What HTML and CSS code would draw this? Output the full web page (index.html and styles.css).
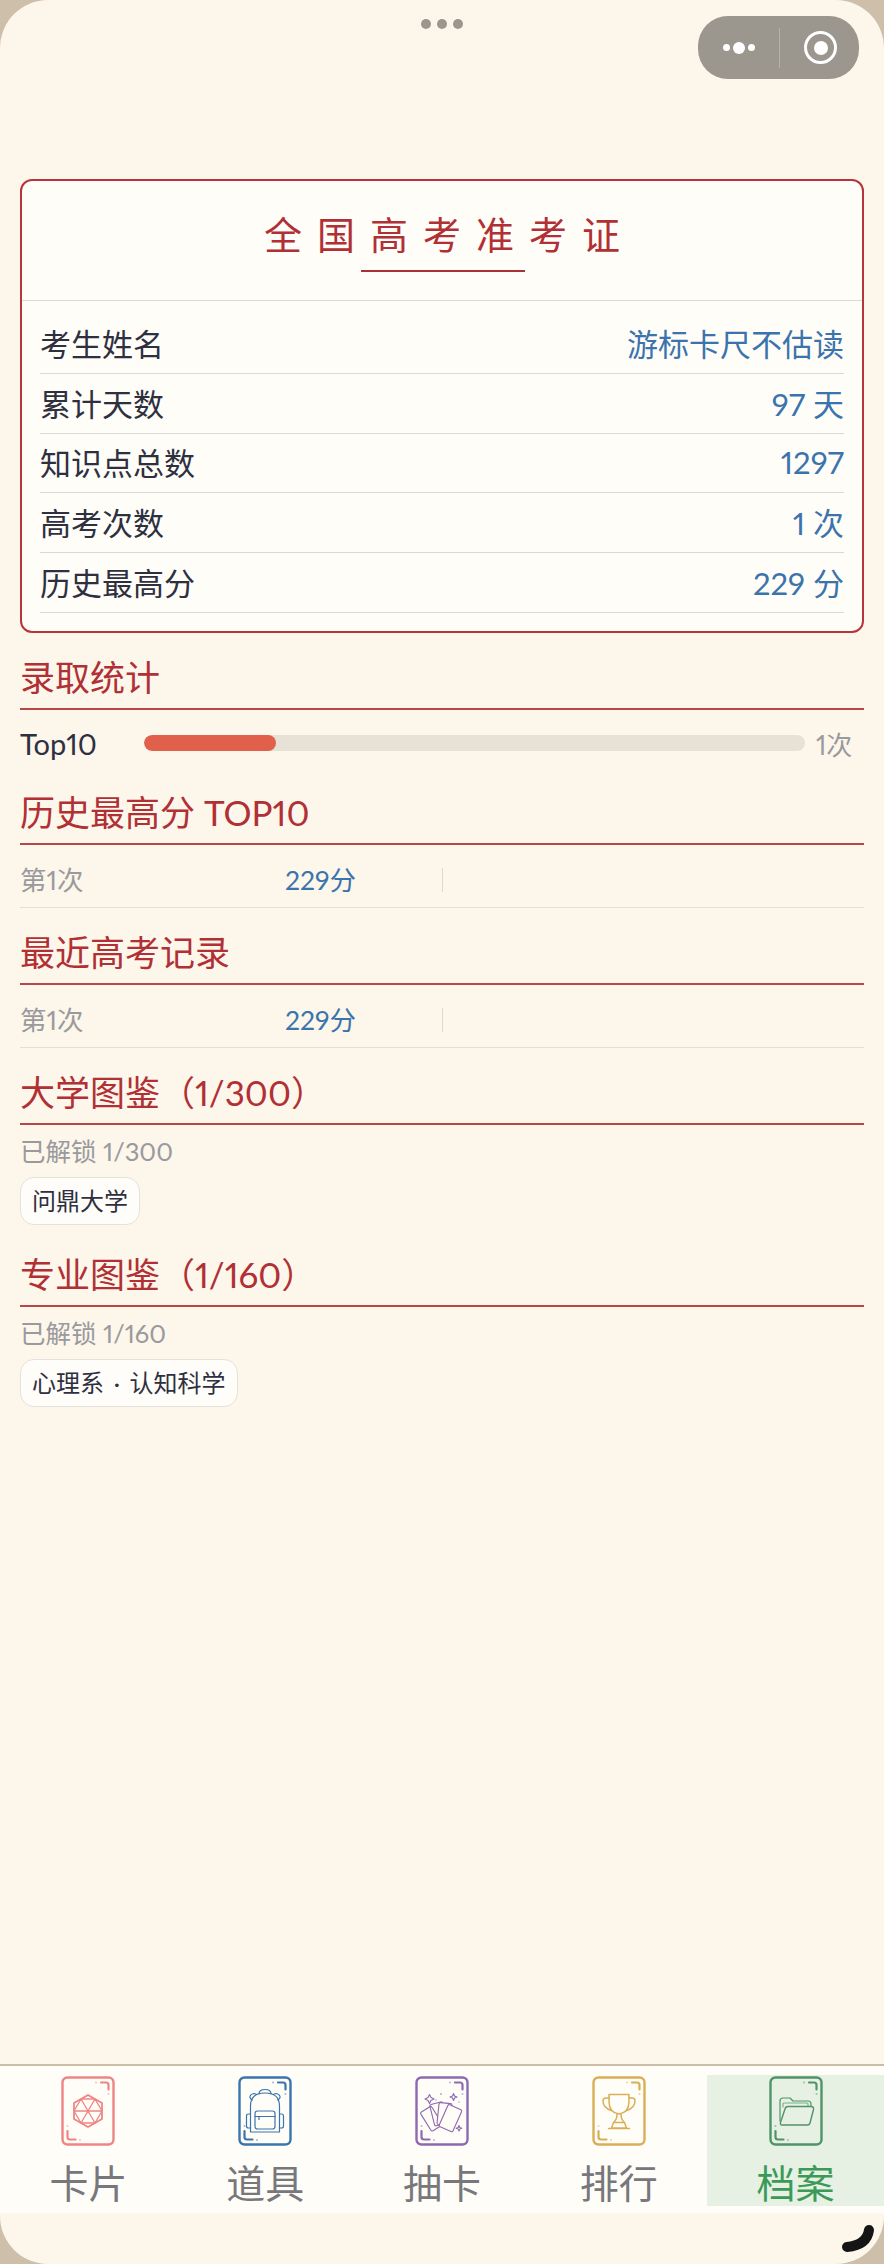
FILE: index.html
```html
<!DOCTYPE html>
<html lang="zh-CN">
<head>
    <meta charset="UTF-8">
    <title>档案</title>
    <link rel="stylesheet" href="styles.css">
</head>
<body>
    <svg class="defs" width="0" height="0">
        <symbol id="cardFrame" viewBox="0 0 54 70">
            <rect x="1.5" y="1.5" width="51" height="67" rx="5" fill="none" stroke="currentColor" stroke-width="2.4"/>
            <path d="M40 6.5h5q2.500 0 2.500 2.500v4.500M6.500 55v6q0 2.500 2.500 2.500h5.500" fill="none" stroke="currentColor" stroke-width="2.200" stroke-linecap="round"/>
            <circle cx="35" cy="6.500" r="1" fill="currentColor" opacity=".5"/>
            <circle cx="47.500" cy="18" r="1" fill="currentColor" opacity=".5"/>
            <circle cx="6.500" cy="50" r="1" fill="currentColor" opacity=".5"/>
            <circle cx="19" cy="64" r="1" fill="currentColor" opacity=".5"/>
        </symbol>
    </svg>

    <div class="screen">
        <div class="drag-dots"><i></i><i></i><i></i></div>
        <div class="capsule">
            <div class="capsule-more"><i></i><i></i><i></i></div>
            <div class="capsule-line"></div>
            <div class="capsule-ring"><i></i></div>
        </div>

        <main class="content">
            <div class="ticket">
                <div class="ticket-head">
                    <h1>全国高考准考证</h1>
                    <div class="ticket-mark"></div>
                </div>
                <div class="ticket-rows">
                    <div class="ticket-row"><span>考生姓名</span><b>游标卡尺不估读</b></div>
                    <div class="ticket-row"><span>累计天数</span><b>97 天</b></div>
                    <div class="ticket-row"><span>知识点总数</span><b>1297</b></div>
                    <div class="ticket-row"><span>高考次数</span><b>1 次</b></div>
                    <div class="ticket-row"><span>历史最高分</span><b>229 分</b></div>
                </div>
            </div>

            <section class="section">
                <h2>录取统计</h2>
                <div class="stat-row">
                    <span class="stat-name">Top10</span>
                    <div class="stat-track"><div class="stat-fill" style="width: 20%"></div></div>
                    <span class="stat-count">1次</span>
                </div>
            </section>

            <section class="section">
                <h2>历史最高分 TOP10</h2>
                <div class="score-row">
                    <span class="score-name">第1次</span>
                    <span class="score-value">229分</span>
                    <span class="score-extra"></span>
                </div>
            </section>

            <section class="section">
                <h2>最近高考记录</h2>
                <div class="score-row">
                    <span class="score-name">第1次</span>
                    <span class="score-value">229分</span>
                    <span class="score-extra"></span>
                </div>
            </section>

            <section class="section">
                <h2>大学图鉴（1/300）</h2>
                <p class="unlock">已解锁 1/300</p>
                <div class="chips"><span class="chip">问鼎大学</span></div>
            </section>

            <section class="section">
                <h2>专业图鉴（1/160）</h2>
                <p class="unlock">已解锁 1/160</p>
                <div class="chips"><span class="chip">心理系 · 认知科学</span></div>
            </section>
        </main>

        <nav class="tabbar">
            <div class="tab tab-card">
                <svg class="tab-icon" viewBox="0 0 54 70">
                    <use href="#cardFrame"/>
                    <g fill="none" stroke="currentColor" stroke-width="1.300" stroke-linejoin="round">
                        <path d="M27 19l14 8v16l-14 8-14-8V27z" stroke-width="1.800"/>
                        <path d="M20 23L13 35l7 12M34 23l7 12-7 12M20 23l7 12 7-12M20 47l7-12 7 12M13 35h28M20 23h14M20 47h14"/>
                    </g>
                </svg>
                <span>卡片</span>
            </div>
            <div class="tab tab-bag">
                <svg class="tab-icon" viewBox="0 0 54 70">
                    <use href="#cardFrame"/>
                    <g fill="none" stroke="currentColor" stroke-width="1.200" stroke-linejoin="round" stroke-linecap="round">
                        <path d="M12.500 56V30q0-13 14.500-13t14.500 13v26z"/>
                        <path d="M21 18q0-4.500 6-4.500t6 4.500M14.500 24q-3-1-2.500-3.500t4-3l3 1M39.500 24q3-1 2.500-3.500t-4-3l-3 1"/>
                        <rect x="17" y="35" width="20" height="18" rx="2.500"/>
                        <path d="M17 40.500h20M21 40.500v3M12.500 38h-2q-2 0-2 2v10q0 2 2 2h2M41.500 38h2q2 0 2 2v10q0 2-2 2h-2"/>
                    </g>
                </svg>
                <span>道具</span>
            </div>
            <div class="tab tab-draw">
                <svg class="tab-icon" viewBox="0 0 54 70">
                    <use href="#cardFrame"/>
                    <g fill="none" stroke="currentColor" stroke-width="1.100" stroke-linejoin="round">
                        <rect x="10" y="32" width="13" height="22" rx="1.500" transform="rotate(-32 16 43)"/>
                        <rect x="17" y="27" width="13" height="22" rx="1.500" transform="rotate(-14 23 38)"/>
                        <rect x="23" y="27" width="13" height="22" rx="1.500" fill="#fffdf8" transform="rotate(6 29 38)"/>
                        <rect x="28" y="30" width="15" height="24" rx="1.500" fill="#fffdf8" transform="rotate(24 35 42)"/>
                        <path d="M13 21.500l1.500-3 1.500 3 3 1.500-3 1.500-1.500 3-1.500-3-3-1.500zM38.500 17.500l1 2.500 2.500 1-2.500 1-1 2.500-1-2.500-2.500-1 2.500-1zM44 49.500l.8 2 2 .8-2 .8-.8 2-.8-2-2-.8 2-.8z"/>
                    </g>
                    <circle cx="26" cy="18" r="1" fill="currentColor" opacity=".6"/>
                    <circle cx="21" cy="24" r=".8" fill="currentColor" opacity=".6"/>
                    <circle cx="44" cy="26" r=".8" fill="currentColor" opacity=".6"/>
                </svg>
                <span>抽卡</span>
            </div>
            <div class="tab tab-rank">
                <svg class="tab-icon" viewBox="0 0 54 70">
                    <use href="#cardFrame"/>
                    <g fill="none" stroke="currentColor" stroke-width="1.500" stroke-linejoin="round" stroke-linecap="round">
                        <path d="M17 18.500h20v7q0 11-10 12.500-10-1.500-10-12.500z"/>
                        <path d="M17 22h-3q-3 0-3 3 0 7 8.500 9.500M37 22h3q3 0 3 3 0 7-8.500 9.500"/>
                        <path d="M25 38.500q0 5-3.500 8h11q-3.500-3-3.500-8M21.500 46.500l-2 5.500h15l-2-5.500M16.500 52.500h21"/>
                    </g>
                </svg>
                <span>排行</span>
            </div>
            <div class="tab tab-file active">
                <svg class="tab-icon" viewBox="0 0 54 70">
                    <use href="#cardFrame"/>
                    <g fill="none" stroke="currentColor" stroke-width="1.200" stroke-linejoin="round" stroke-linecap="round">
                        <path d="M11 45V25q0-3 3-3h7l3 3h15q3 0 3 3v2"/>
                        <path d="M14 31v-3q0-1 1-1h23q1 0 1 1v2" opacity=".7"/>
                        <path d="M16 33q.5-2.500 3-2.500h23q3 0 2.500 3L41 47q-.5 2-2.500 2H13q-2 0-1.500-2.500z" stroke-width="1.400"/>
                    </g>
                </svg>
                <span>档案</span>
            </div>
        </nav>

        <svg class="corner-mark" viewBox="0 0 44 40">
            <path d="M29 6Q27 21 7 23" fill="none" stroke="#151515" stroke-width="10" stroke-linecap="round"/>
        </svg>
    </div>
</body>
</html>
```

FILE: styles.css
```css
* {
    box-sizing: border-box;
}

body {
    margin: 0;
    background-color: #cdbfa9;
    font-family: "Lato", "Noto Sans CJK SC", sans-serif;
    font-variant-numeric: proportional-nums;
    color: #2e3040;
}

.defs {
    position: absolute;
}

.screen {
    position: relative;
    display: flex;
    flex-direction: column;
    height: 2264px;
    padding-bottom: 51px;
    border-radius: 48px;
    background-color: #fdf6ea;
    overflow: hidden;
}

/* barra superior */
.drag-dots {
    position: absolute;
    top: 19px;
    left: 421px;
    display: flex;
    gap: 6px;
}

.drag-dots i {
    width: 10px;
    height: 10px;
    border-radius: 50%;
    background-color: #9b978e;
}

.capsule {
    position: absolute;
    top: 16px;
    left: 698px;
    display: flex;
    align-items: center;
    width: 161px;
    height: 63px;
    border-radius: 30px;
    background-color: #9b978e;
}

.capsule-more {
    display: flex;
    align-items: center;
    justify-content: center;
    gap: 3px;
    width: 81px;
}

.capsule-more i {
    width: 7px;
    height: 7px;
    border-radius: 50%;
    background-color: #fff;
}

.capsule-more i:nth-child(2) {
    width: 12px;
    height: 12px;
}

.capsule-line {
    width: 1px;
    height: 40px;
    background-color: #b5b1a9;
}

.capsule-ring {
    display: flex;
    align-items: center;
    justify-content: center;
    width: 33px;
    height: 33px;
    margin-left: 24px;
    border: 3px solid #fff;
    border-radius: 50%;
}

.capsule-ring i {
    width: 14px;
    height: 14px;
    border-radius: 50%;
    background-color: #fff;
}

.content {
    flex: 1;
    padding: 179px 20px 0;
}

/* tarjeta */
.ticket {
    height: 454px;
    border: 2px solid #b5353a;
    border-radius: 12px;
    background-color: #fffdf8;
}

.ticket-head {
    display: flex;
    flex-direction: column;
    align-items: center;
    height: 120px;
    padding-top: 25px;
    border-bottom: 1px solid #dcd9d3;
}

h1 {
    margin: 0;
    padding-left: 15px;
    font-size: 38px;
    font-weight: 400;
    line-height: 56px;
    letter-spacing: 15px;
    color: #b03035;
}

.ticket-mark {
    width: 164px;
    height: 2px;
    margin-top: 8px;
    margin-left: 2px;
    background-color: #a93034;
}

.ticket-rows {
    padding: 13px 18px 0;
}

.ticket-row {
    display: flex;
    align-items: center;
    justify-content: space-between;
    height: 59.75px;
    padding-bottom: 2px;
    border-bottom: 1px solid #dcd9d3;
    font-size: 31px;
}

.ticket-row b {
    font-weight: 400;
    color: #3b74ad;
}

/* secciones */
.section {
    padding-top: 25px;
}

h2 {
    margin: 0;
    height: 52px;
    padding-bottom: 12px;
    border-bottom: 2px solid #b8474a;
    font-size: 35px;
    font-weight: 400;
    line-height: 38px;
    color: #b03035;
}

.stat-row {
    display: flex;
    align-items: center;
    height: 34px;
    margin: 16px 0 8px;
}

.stat-name {
    width: 124px;
    font-size: 29px;
}

.stat-track {
    width: 661px;
    height: 16px;
    border-radius: 8px;
    background-color: #e8e1d6;
    overflow: hidden;
}

.stat-fill {
    height: 100%;
    border-radius: 8px;
    background-color: #e0604c;
}

.stat-count {
    margin-left: 11px;
    font-size: 26px;
    color: #9a9a9e;
}

.score-row {
    display: grid;
    grid-template-columns: 265px 157px 1fr;
    align-items: center;
    height: 63px;
    padding: 20px 0 12px;
    border-bottom: 1px solid #e2dfd8;
    font-size: 26.500px;
    line-height: 30px;
}

.score-name {
    color: #9a9a9e;
}

.score-value {
    color: #3b74ad;
}

.score-extra {
    height: 24px;
    border-left: 1px solid #dcd9d3;
}

.unlock {
    margin: 11px 0 0;
    font-size: 25.500px;
    line-height: 30px;
    color: #9a9a9e;
}

.chips {
    display: flex;
    flex-wrap: wrap;
    margin-top: 11px;
    margin-bottom: 5px;
}

.chip {
    height: 48px;
    padding: 0 11px;
    border: 1px solid #e6e2da;
    border-radius: 14px;
    background-color: #fffdfa;
    font-size: 24px;
    line-height: 46px;
    word-spacing: 3.500px;
}

/* barra inferior */
.tabbar {
    display: grid;
    grid-template-columns: repeat(5, 1fr);
    height: 149px;
    padding: 9px 0 7px;
    border-top: 2px solid #c9bda7;
    background-color: #fffdf8;
}

.tab {
    display: flex;
    flex-direction: column;
    align-items: center;
    padding-top: 1px;
    font-size: 39px;
    line-height: 44px;
    color: #77777c;
}

.tab-icon {
    width: 54px;
    height: 70px;
    margin-bottom: 15px;
}

.tab-card .tab-icon {
    color: #ee8585;
}

.tab-bag .tab-icon {
    color: #3b74ad;
}

.tab-draw .tab-icon {
    color: #8e68b0;
}

.tab-rank .tab-icon {
    color: #d9ae56;
}

.tab-file .tab-icon {
    color: #4f9468;
}

.tab.active {
    background-color: #e6f0e3;
    color: #3c9a58;
}

.corner-mark {
    position: absolute;
    right: 0;
    bottom: 0;
    width: 44px;
    height: 40px;
}
```
